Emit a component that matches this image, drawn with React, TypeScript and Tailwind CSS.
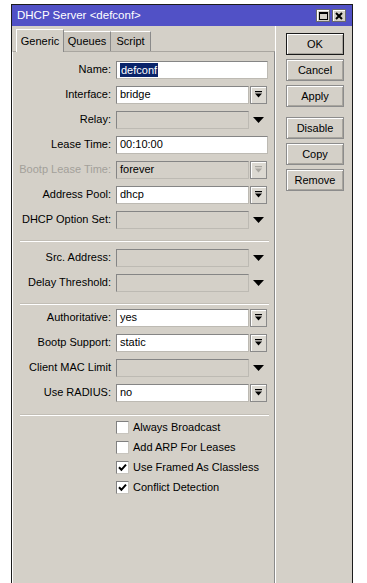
import React from "react";

const FONT = "font-['Liberation_Sans',Arial,sans-serif]";

function DropIcon({ disabled }: { disabled?: boolean }) {
  const c = disabled ? "#a8a6a0" : "#000";
  return (
    <svg width="9" height="9" viewBox="0 0 9 9">
      <rect x="1" y="1" width="7" height="1.2" fill={c} />
      <polygon points="1,3.5 8,3.5 4.5,7.5" fill={c} />
    </svg>
  );
}

function Arrow() {
  return (
    <svg width="11" height="6" viewBox="0 0 11 6">
      <polygon points="0,0 11,0 5.5,6" fill="#000" />
    </svg>
  );
}

type Kind = "text" | "combo" | "empty" | "comboDisabled";

function Row({
  label,
  value,
  kind,
  labelDisabled,
  selected,
}: {
  label: string;
  value?: string;
  kind: Kind;
  labelDisabled?: boolean;
  selected?: boolean;
}) {
  const inputBase =
    "h-[18px] border border-t-[#858585] border-l-[#858585] border-r-[#bdbab3] border-b-[#bdbab3] flex items-center pl-[3px] text-[11px] text-black leading-none";
  const enabledBg = kind === "text" || kind === "combo" ? "bg-white" : "bg-[#d4d0c8]";
  const width = kind === "text" ? "w-[152px]" : "w-[133px]";
  return (
    <div className="h-[25px] flex items-center">
      <div
        className={`w-[103px] pr-[5px] text-right text-[11px] ${
          labelDisabled ? "text-[#a3a09a]" : "text-black"
        }`}
      >
        {label}
      </div>
      <div className={`${inputBase} ${enabledBg} ${width}`}>
        {selected ? (
          <span className="bg-[#0a246a] text-white px-[1px] leading-[14px]">{value}</span>
        ) : (
          <span>{value}</span>
        )}
      </div>
      {(kind === "combo" || kind === "comboDisabled") && (
        <div className="ml-[1px] w-[17px] h-[18px] border border-[#8a8a8a] shadow-[inset_1px_1px_0_#ffffff] bg-[#dcd9d2] flex items-center justify-center">
          <DropIcon disabled={kind === "comboDisabled"} />
        </div>
      )}
      {kind === "empty" && (
        <div className="ml-[1px] w-[17px] h-[18px] flex items-center justify-center">
          <Arrow />
        </div>
      )}
    </div>
  );
}

function Sep({ cls }: { cls: string }) {
  return (
    <div className={`${cls} ml-[7px] mr-[5px] h-[2px] border-t border-t-[#c2beb6] border-b border-b-[#ffffff]`} />
  );
}

function Check({ label, checked }: { label: string; checked?: boolean }) {
  return (
    <div className="h-[20px] flex items-center pl-[103px]">
      <div className="w-[13px] h-[13px] bg-white border border-t-[#808080] border-l-[#808080] border-r-[#c8c5be] border-b-[#c8c5be] flex items-center justify-center">
        {checked && (
          <svg width="9" height="9" viewBox="0 0 9 9">
            <path d="M1 4.2 L3.4 6.8 L8 1.6" stroke="#000" strokeWidth="2" fill="none" />
          </svg>
        )}
      </div>
      <span className="ml-[4px] text-[11px] text-black">{label}</span>
    </div>
  );
}

function Btn({ label, def, cls = "" }: { label: string; def?: boolean; cls?: string }) {
  return (
    <div
      className={`${cls} w-[58px] h-[22px] flex items-center justify-center text-[11px] text-black bg-[#d4d0c8] border ${
        def ? "border-[#1a1a1a]" : "border-[#8c8c8c]"
      } shadow-[inset_1px_1px_0_#ffffff,inset_-1px_-1px_0_#a8a59e]`}
    >
      {label}
    </div>
  );
}

export default function App() {
  return (
    <div className={`w-[367px] h-[583px] bg-white overflow-hidden pt-[4px] pl-[11px] ${FONT}`}>
      <div className="w-[342px] h-[600px] border border-[#1c1c1c] bg-[#d4d0c8] flex flex-col">
        {/* Title bar */}
        <div className="h-[21px] bg-[#5151c6] flex items-center justify-between pl-[5px] pr-[6px]">
          <span className="text-white text-[11.5px] leading-none">DHCP Server &lt;defconf&gt;</span>
          <div className="flex items-center gap-[2px]">
            <div className="w-[14px] h-[13px] bg-[#d4d0c8] border border-[#6b6b6b] shadow-[inset_1px_1px_0_#fff] flex items-center justify-center">
              <div className="w-[9px] h-[8px] border border-black border-t-2" />
            </div>
            <div className="w-[14px] h-[13px] bg-[#d4d0c8] border border-[#6b6b6b] shadow-[inset_1px_1px_0_#fff] flex items-center justify-center">
              <svg width="8" height="8" viewBox="0 0 8 8">
                <path d="M1 1 L7 7 M7 1 L1 7" stroke="#000" strokeWidth="2" />
              </svg>
            </div>
          </div>
        </div>
        {/* Body */}
        <div className="flex flex-1">
          {/* Left */}
          <div className="w-[263px] flex flex-col pt-[2px]">
            <div className="flex items-end pl-[4px] h-[23px]">
              <div className="h-[23px] w-[48px] border-t border-l border-t-white border-l-white border-r border-r-[#8a8a8a] bg-[#d4d0c8] flex items-center justify-center text-[11px] text-black relative top-[1px] z-10">
                Generic
              </div>
              <div className="h-[20px] w-[47px] border-t border-t-white border-r border-r-[#8a8a8a] bg-[#c9c5bd] flex items-center justify-center text-[11px] text-black">
                Queues
              </div>
              <div className="h-[20px] w-[40px] border-t border-t-white border-r border-r-[#8a8a8a] bg-[#c9c5bd] flex items-center justify-center text-[11px] text-black">
                Script
              </div>
            </div>
            <div className="flex-1 border-t border-t-[#a9a6a0] border-l border-l-white border-r border-r-[#8a8a8a] pt-[5px]">
              <Row label="Name:" value="defconf" kind="text" selected />
              <Row label="Interface:" value="bridge" kind="combo" />
              <Row label="Relay:" kind="empty" />
              <Row label="Lease Time:" value="00:10:00" kind="text" />
              <Row label="Bootp Lease Time:" value="forever" kind="comboDisabled" labelDisabled />
              <Row label="Address Pool:" value="dhcp" kind="combo" />
              <Row label="DHCP Option Set:" kind="empty" />
              <Sep cls="mt-[8px]" />
              <div className="mt-[3px]">
                <Row label="Src. Address:" kind="empty" />
                <Row label="Delay Threshold:" kind="empty" />
              </div>
              <Sep cls="mt-[8px]" />
              <Row label="Authoritative:" value="yes" kind="combo" />
              <Row label="Bootp Support:" value="static" kind="combo" />
              <Row label="Client MAC Limit" kind="empty" />
              <Row label="Use RADIUS:" value="no" kind="combo" />
              <Sep cls="mt-[9px]" />
              <div className="mt-px">
                <Check label="Always Broadcast" />
                <Check label="Add ARP For Leases" />
                <Check label="Use Framed As Classless" checked />
                <Check label="Conflict Detection" checked />
              </div>
            </div>
          </div>
          {/* Right */}
          <div className="flex-1 flex flex-col pl-[10px] pt-[7px] border-l border-l-white">
            <Btn label="OK" def />
            <Btn label="Cancel" cls="mt-[4px]" />
            <Btn label="Apply" cls="mt-[4px]" />
            <Btn label="Disable" cls="mt-[10px]" />
            <Btn label="Copy" cls="mt-[4px]" />
            <Btn label="Remove" cls="mt-[4px]" />
          </div>
        </div>
      </div>
    </div>
  );
}
